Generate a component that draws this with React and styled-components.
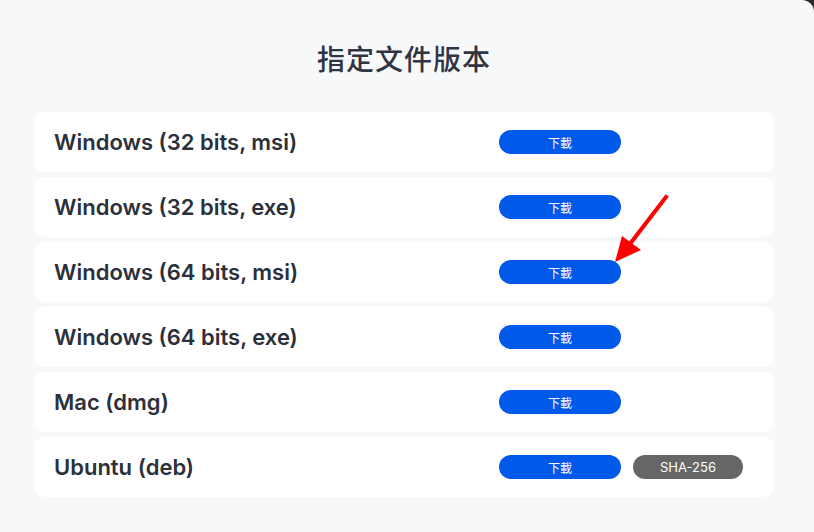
import styled, { createGlobalStyle } from "styled-components";

const GlobalStyle = createGlobalStyle`
  html, body {
    margin: 0;
    padding: 0;
    background: #2b2b2b;
  }
  body {
    font-family: Inter, "Noto Sans CJK TC", sans-serif;
  }
`;

const Page = styled.div`
  position: relative;
  width: 814px;
  height: 532px;
  box-sizing: border-box;
  background: #f7f8fa;
  border-top-right-radius: 12px;
  padding: 34px 40px 0 34px;
  overflow: hidden;
`;

const Title = styled.h1`
  margin: 0 0 30px;
  text-align: center;
  font-family: "Noto Sans CJK TC", "Noto Sans CJK SC", sans-serif;
  font-size: 28px;
  font-weight: 500;
  line-height: 48px;
  color: #2f3542;
  letter-spacing: 1px;
`;

const List = styled.div`
  display: flex;
  flex-direction: column;
  gap: 5px;
`;

const Row = styled.div`
  display: grid;
  grid-template-columns: 433px 122px 110px;
  column-gap: 12px;
  align-items: center;
  height: 60px;
  padding-left: 20px;
  background: #ffffff;
  border-radius: 10px;
`;

const Label = styled.div`
  font-family: Inter, sans-serif;
  font-size: 22px;
  font-weight: 600;
  color: #2b303b;
  white-space: nowrap;
`;

const Pill = styled.button`
  height: 24px;
  border: none;
  border-radius: 12px;
  padding: 0;
  color: #ffffff;
  background: ${(p) => (p.$gray ? "#666666" : "#0059e8")};
  font-family: ${(p) => (p.$gray ? "Inter, sans-serif" : '"Noto Sans CJK TC", sans-serif')};
  font-size: ${(p) => (p.$gray ? "13px" : "12px")};
  cursor: pointer;
`;

const Arrow = styled.svg`
  position: absolute;
  left: 610px;
  top: 192px;
`;

const rows = [
  "Windows (32 bits, msi)",
  "Windows (32 bits, exe)",
  "Windows (64 bits, msi)",
  "Windows (64 bits, exe)",
  "Mac (dmg)",
  "Ubuntu (deb)",
];

export default function App() {
  return (
    <>
      <GlobalStyle />
      <Page>
        <Title>指定文件版本</Title>
        <List>
          {rows.map((name, i) => (
            <Row key={name}>
              <Label>{name}</Label>
              <Pill>下載</Pill>
              {i === rows.length - 1 && <Pill $gray>SHA-256</Pill>}
            </Row>
          ))}
        </List>
        <Arrow width="64" height="76" viewBox="0 0 64 76">
          <line x1="56" y1="5" x2="20" y2="52" stroke="#ff0000" strokeWidth="4" strokeLinecap="square" />
          <polygon points="5,70 12,44 31,58" fill="#ff0000" />
        </Arrow>
      </Page>
    </>
  );
}
